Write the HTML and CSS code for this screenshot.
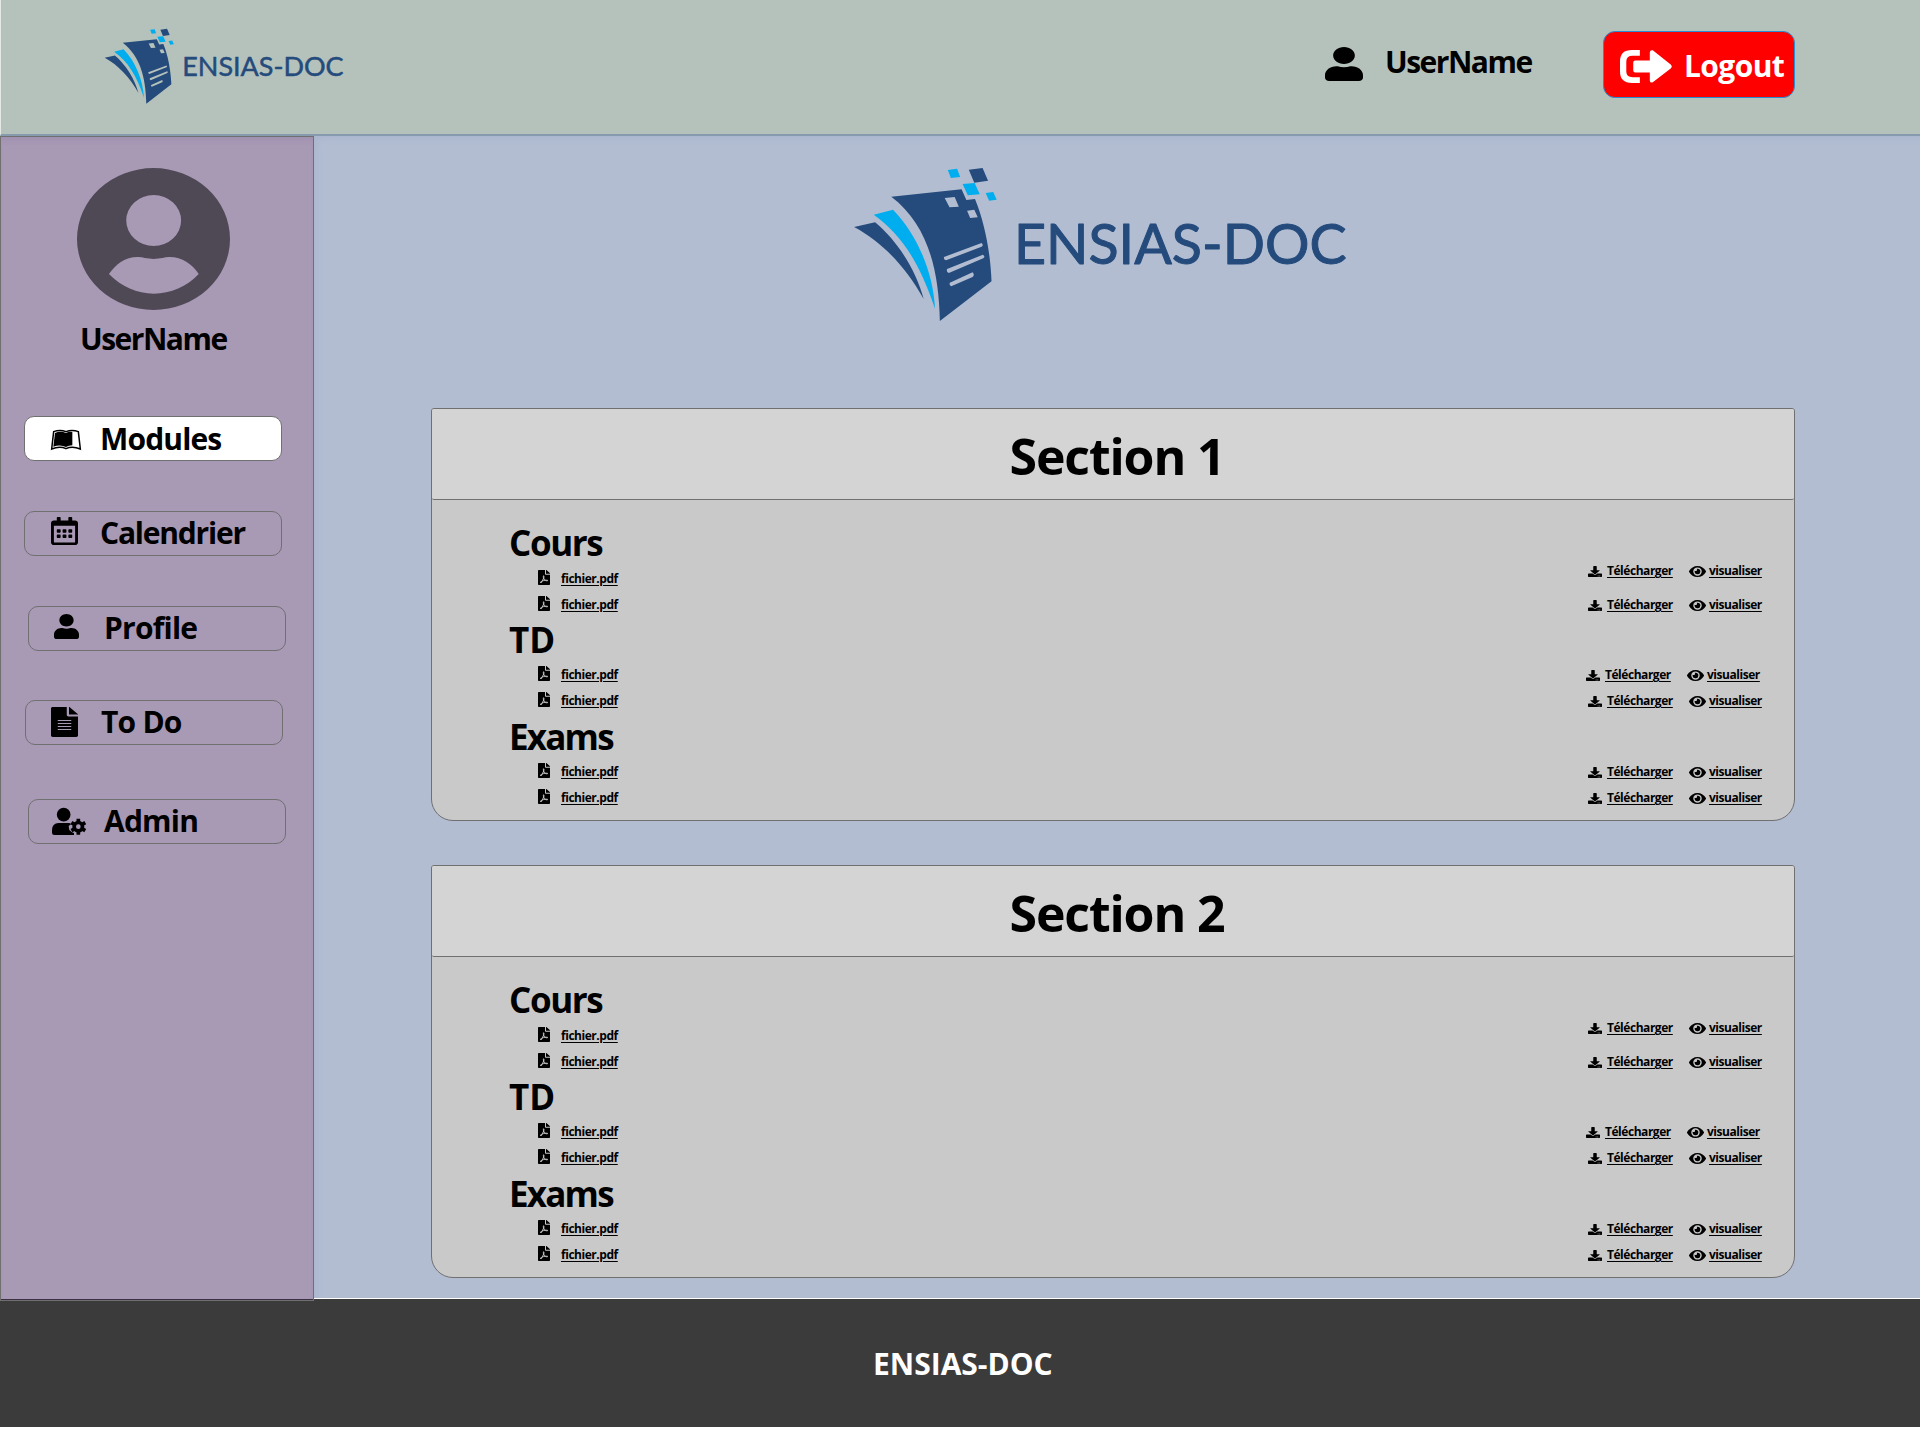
FILE: index.html
```html
<!DOCTYPE html>
<html lang="fr">
<head>
<meta charset="utf-8">
<title>ENSIAS-DOC</title>
<link rel="stylesheet" href="styles.css">
</head>
<body>
<svg class="defs" aria-hidden="true">
  <symbol id="logo" viewBox="0 0 1568 570" preserveAspectRatio="none">
    <g fill="#244b7c">
      <path d="M70 231L131 217C195 272 250 360 272 447C220 350 150 275 70 231Z"/>
      <path fill-rule="evenodd" d="M178 140L382 118L396 150L421 147C450 220 466 310 469 394L319 513C316 350 280 220 178 140ZM333 144L362 141L374 170L347 172ZM398 182L419 179L429 202L407 204ZM331 321Q329 329 337 331L440 290Q447 285 440 279ZM340 357Q337 366 345 369L445 325Q452 319 444 314ZM348 398Q345 406 352 409L414 381Q421 374 414 367Z"/>
      <path d="M403 59L443 54L459 92L419 98Z"/>
    </g>
    <g fill="#00aeef">
      <path d="M127 194L183 179C255 255 300 370 305 476C260 340 210 255 127 194Z"/>
      <path d="M342 60L369 56L378 81L351 84ZM385 102L420 99L435 133L400 136ZM452 129L474 126L484 149L462 152Z"/>
    </g>
    <text x="534" y="343" class="logo-text" textLength="966" lengthAdjust="spacingAndGlyphs">ENSIAS-DOC</text>
  </symbol>
  <symbol id="user" viewBox="0 0 448 512" preserveAspectRatio="none"><path d="M224 256c70.7 0 128-57.3 128-128S294.7 0 224 0 96 57.3 96 128s57.3 128 128 128zm89.6 32h-16.7c-22.2 10.2-46.9 16-72.9 16s-50.6-5.8-72.9-16h-16.7C60.2 288 0 348.2 0 422.4V464c0 26.5 21.5 48 48 48h352c26.5 0 48-21.5 48-48v-41.6c0-74.2-60.2-134.4-134.4-134.4z"/></symbol>
  <symbol id="download" viewBox="0 0 512 512" preserveAspectRatio="none"><path d="M216 0h80c13.3 0 24 10.7 24 24v168h87.7c17.8 0 26.7 21.5 14.1 34.1L269.7 378.3c-7.5 7.5-19.8 7.5-27.3 0L90.1 226.1c-12.6-12.6-3.7-34.1 14.1-34.1H192V24c0-13.3 10.7-24 24-24zm296 376v112c0 13.3-10.7 24-24 24H24c-13.3 0-24-10.7-24-24V376c0-13.3 10.7-24 24-24h146.7l49 49c20.1 20.1 52.5 20.1 72.6 0l49-49H488c13.3 0 24 10.7 24 24zm-124 88c0-11-9-20-20-20s-20 9-20 20 9 20 20 20 20-9 20-20zm64 0c0-11-9-20-20-20s-20 9-20 20 9 20 20 20 20-9 20-20z"/></symbol>
  <symbol id="eye" viewBox="0 64 576 384" preserveAspectRatio="none"><path d="M572.52 241.4C518.29 135.59 410.93 64 288 64S57.68 135.64 3.48 241.41a32.35 32.35 0 0 0 0 29.19C57.71 376.41 165.07 448 288 448s230.32-71.64 284.52-177.41a32.35 32.35 0 0 0 0-29.19zM288 400a144 144 0 1 1 144-144 143.93 143.93 0 0 1-144 144zm0-240a95.31 95.31 0 0 0-25.31 3.79 47.85 47.85 0 0 1-66.9 66.9A95.78 95.78 0 1 0 288 160z"/></symbol>
  <symbol id="pdf" viewBox="0 0 384 512" preserveAspectRatio="none"><path d="M181.9 256.1c-5-16-4.9-46.9-2-46.9 8.4 0 7.6 36.9 2 46.9zm-1.7 47.2c-7.7 20.2-17.3 43.3-28.4 62.7 18.3-7 39-17.2 62.9-21.9-12.7-9.6-24.9-23.4-34.5-40.8zM86.1 428.1c0 .8 13.2-5.4 34.9-40.2-6.7 6.3-29.1 24.5-34.9 40.2zM248 160h136v328c0 13.3-10.7 24-24 24H24c-13.3 0-24-10.7-24-24V24C0 10.7 10.7 0 24 0h200v136c0 13.2 10.8 24 24 24zm-8 171.8c-20-12.2-33.3-29-42.7-53.8 4.5-18.5 11.6-46.6 6.2-64.2-4.7-29.4-42.4-26.5-47.8-6.8-5 18.3-.4 44.1 8.1 77-11.6 27.6-28.7 64.6-40.8 85.8-.1 0-.1.1-.2.1-27.1 13.9-73.6 44.5-54.5 68 5.6 6.9 16 10 21.5 10 17.9 0 35.7-18 61.1-61.8 25.8-8.5 54.1-19.1 79-23.2 21.7 11.8 47.1 19.5 64 19.5 29.2 0 31.2-32 19.7-43.4-13.9-13.6-54.3-9.7-73.6-7.2zM377 105L279 7c-4.5-4.5-10.6-7-17-7h-6v128h128v-6.1c0-6.3-2.5-12.4-7-16.9zm-74.1 255.3c4.1-2.7-2.5-11.9-42.8-9 37.1 15.8 42.8 9 42.8 9z"/></symbol>
</svg>

<header class="topbar">
  <svg class="topbar-logo"><use href="#logo"/></svg>
  <div class="topbar-user">
    <svg class="topbar-user-icon"><use href="#user"/></svg>
    <span class="name">UserName</span>
  </div>
  <button class="logout">
    <svg class="logout-icon" viewBox="0 0 157 98" preserveAspectRatio="none"><path d="M60 0V17H38Q19 17 19 34V64Q19 81 38 81H60V98H36Q0 98 0 64V34Q0 0 36 0ZM46 31H90V7Q91-1 99 1L154 44Q159 49 154 54L99 96Q91 99 90 91V67H46Q40 67 40 61V37Q40 31 46 31Z"/></svg>
    <span>Logout</span>
  </button>
</header>

<div class="middle">
  <aside class="sidebar">
    <svg class="avatar" viewBox="230 143 460 427" preserveAspectRatio="none"><path fill-rule="evenodd" d="M230 356.500A230 213.500 0 0 1 690 356.500A230 213.500 0 0 1 230 356.500ZM378 301A82.500 76.500 0 0 0 543 301A82.500 76.500 0 0 0 378 301ZM326 462C348 432 375 410 415 411Q425 411 434 414Q460 419 487 414Q497 411 506 411C545 410 575 431 596 462C560 500 512 521 461 521C410 521 364 500 326 462Z"/></svg>
    <div class="name sidebar-name">UserName</div>
    <nav class="menu">
      <a class="item modules active">
        <svg viewBox="0 0 90 60"><path fill="none" stroke="#000" stroke-width="4.500" d="M8 5Q27-2 45 5Q63-2 82 5L88 57Q64 47 45 56Q26 47 2 57Z"/><path d="M12 9Q28 2 45 9Q54 4 64 6V46Q53 47 45 51Q28 42 7 50Z"/></svg>
        <span>Modules</span>
      </a>
      <a class="item calendar">
        <svg viewBox="0 0 448 512" preserveAspectRatio="none"><path d="M148 288h-40c-6.600 0-12-5.400-12-12v-40c0-6.600 5.400-12 12-12h40c6.600 0 12 5.400 12 12v40c0 6.600-5.400 12-12 12zm108-12v-40c0-6.600-5.400-12-12-12h-40c-6.600 0-12 5.400-12 12v40c0 6.600 5.400 12 12 12h40c6.600 0 12-5.400 12-12zm96 0v-40c0-6.600-5.400-12-12-12h-40c-6.600 0-12 5.400-12 12v40c0 6.600 5.400 12 12 12h40c6.600 0 12-5.400 12-12zm-96 96v-40c0-6.600-5.400-12-12-12h-40c-6.600 0-12 5.400-12 12v40c0 6.600 5.400 12 12 12h40c6.600 0 12-5.400 12-12zm-96 0v-40c0-6.600-5.400-12-12-12h-40c-6.600 0-12 5.400-12 12v40c0 6.600 5.400 12 12 12h40c6.600 0 12-5.400 12-12zm192 0v-40c0-6.600-5.400-12-12-12h-40c-6.600 0-12 5.400-12 12v40c0 6.600 5.400 12 12 12h40c6.600 0 12-5.400 12-12zm96-260v352c0 26.500-21.500 48-48 48H48c-26.500 0-48-21.500-48-48V112c0-26.500 21.500-48 48-48h48V12c0-6.600 5.400-12 12-12h40c6.600 0 12 5.400 12 12v52h128V12c0-6.600 5.400-12 12-12h40c6.600 0 12 5.400 12 12v52h48c26.500 0 48 21.500 48 48zm-48 346V160H48v298c0 3.300 2.700 6 6 6h340c3.300 0 6-2.700 6-6z"/></svg>
        <span>Calendrier</span>
      </a>
      <a class="item profile">
        <svg><use href="#user"/></svg>
        <span>Profile</span>
      </a>
      <a class="item todo">
        <svg viewBox="0 0 384 512" preserveAspectRatio="none"><path fill-rule="evenodd" d="M224 136V0H24C10.700 0 0 10.700 0 24v464c0 13.300 10.700 24 24 24h336c13.300 0 24-10.700 24-24V160H248c-13.200 0-24-10.800-24-24zM96 222H288V239H96ZM96 273H288V290H96ZM96 324H288V341H96ZM96 375H288V392H96ZM256 0H262L384 122V128H256Z"/></svg>
        <span>To Do</span>
      </a>
      <a class="item admin">
        <svg viewBox="0 0 102 81"><circle cx="35" cy="20" r="20.500"/><path d="M20 45H50Q56 45 57 49L50 54L52 66L60 73L66 75V81H7Q0 81 0 74V66Q0 46 20 45Z"/><circle cx="79" cy="56" r="12.500" fill="none" stroke="#000" stroke-width="11"/><path stroke="#000" stroke-width="11" d="M79 32V41M79 71V80M58.200 44L66 48.500M92 63.500L99.800 68M58.200 68L66 63.500M92 48.500L99.800 44"/></svg>
        <span>Admin</span>
      </a>
    </nav>
  </aside>

  <main class="content">
    <svg class="hero-logo"><use href="#logo"/></svg>

    <section class="card">
      <h1>Section 1</h1>
      <div class="card-body">
        <h2>Cours</h2>
        <div class="row raised"><svg class="pdf"><use href="#pdf"/></svg><a class="file">fichier.pdf</a><div class="actions"><svg class="dl"><use href="#download"/></svg><a class="get">Télécharger</a><svg class="eye"><use href="#eye"/></svg><a class="view">visualiser</a></div></div>
        <div class="row"><svg class="pdf"><use href="#pdf"/></svg><a class="file">fichier.pdf</a><div class="actions"><svg class="dl"><use href="#download"/></svg><a class="get">Télécharger</a><svg class="eye"><use href="#eye"/></svg><a class="view">visualiser</a></div></div>
        <h2 class="td">TD</h2>
        <div class="row inset"><svg class="pdf"><use href="#pdf"/></svg><a class="file">fichier.pdf</a><div class="actions"><svg class="dl"><use href="#download"/></svg><a class="get">Télécharger</a><svg class="eye"><use href="#eye"/></svg><a class="view">visualiser</a></div></div>
        <div class="row"><svg class="pdf"><use href="#pdf"/></svg><a class="file">fichier.pdf</a><div class="actions"><svg class="dl"><use href="#download"/></svg><a class="get">Télécharger</a><svg class="eye"><use href="#eye"/></svg><a class="view">visualiser</a></div></div>
        <h2 class="exams">Exams</h2>
        <div class="row"><svg class="pdf"><use href="#pdf"/></svg><a class="file">fichier.pdf</a><div class="actions"><svg class="dl"><use href="#download"/></svg><a class="get">Télécharger</a><svg class="eye"><use href="#eye"/></svg><a class="view">visualiser</a></div></div>
        <div class="row"><svg class="pdf"><use href="#pdf"/></svg><a class="file">fichier.pdf</a><div class="actions"><svg class="dl"><use href="#download"/></svg><a class="get">Télécharger</a><svg class="eye"><use href="#eye"/></svg><a class="view">visualiser</a></div></div>
      </div>
    </section>

    <section class="card">
      <h1>Section 2</h1>
      <div class="card-body">
        <h2>Cours</h2>
        <div class="row raised"><svg class="pdf"><use href="#pdf"/></svg><a class="file">fichier.pdf</a><div class="actions"><svg class="dl"><use href="#download"/></svg><a class="get">Télécharger</a><svg class="eye"><use href="#eye"/></svg><a class="view">visualiser</a></div></div>
        <div class="row"><svg class="pdf"><use href="#pdf"/></svg><a class="file">fichier.pdf</a><div class="actions"><svg class="dl"><use href="#download"/></svg><a class="get">Télécharger</a><svg class="eye"><use href="#eye"/></svg><a class="view">visualiser</a></div></div>
        <h2 class="td">TD</h2>
        <div class="row inset"><svg class="pdf"><use href="#pdf"/></svg><a class="file">fichier.pdf</a><div class="actions"><svg class="dl"><use href="#download"/></svg><a class="get">Télécharger</a><svg class="eye"><use href="#eye"/></svg><a class="view">visualiser</a></div></div>
        <div class="row"><svg class="pdf"><use href="#pdf"/></svg><a class="file">fichier.pdf</a><div class="actions"><svg class="dl"><use href="#download"/></svg><a class="get">Télécharger</a><svg class="eye"><use href="#eye"/></svg><a class="view">visualiser</a></div></div>
        <h2 class="exams">Exams</h2>
        <div class="row"><svg class="pdf"><use href="#pdf"/></svg><a class="file">fichier.pdf</a><div class="actions"><svg class="dl"><use href="#download"/></svg><a class="get">Télécharger</a><svg class="eye"><use href="#eye"/></svg><a class="view">visualiser</a></div></div>
        <div class="row"><svg class="pdf"><use href="#pdf"/></svg><a class="file">fichier.pdf</a><div class="actions"><svg class="dl"><use href="#download"/></svg><a class="get">Télécharger</a><svg class="eye"><use href="#eye"/></svg><a class="view">visualiser</a></div></div>
      </div>
    </section>
  </main>
</div>

<footer class="footer">ENSIAS-DOC</footer>
</body>
</html>
```
FILE: styles.css
```css
* { box-sizing: border-box; }
body {
  margin: 0;
  width: 1920px;
  height: 1430px;
  overflow: hidden;
  background: #fff;
  color: #000;
  font: 700 30px/40px "Open Sans", "Noto Sans", sans-serif;
}
svg { display: block; flex: none; overflow: visible; }
.defs { position: absolute; width: 0; height: 0; }
.logo-text {
  font: 400 166px Lato, sans-serif;
  fill: #244b7c;
  stroke: #244b7c;
  stroke-width: 3px;
  stroke-linejoin: round;
}
.name { white-space: nowrap; letter-spacing: -1.5px; }

/* Top bar */
.topbar {
  height: 136px;
  display: flex;
  align-items: flex-start;
  background: #b5c2bb;
  border-left: 1px solid #e4e9e6;
  border-bottom: 2px solid #879bae;
}
.topbar-logo { width: 262px; height: 93px; margin: 20px 0 0 92px; }
.topbar-user { display: flex; margin: 41px 0 0 970px; }
.topbar-user-icon { width: 38px; height: 34px; margin-top: 6px; }
.topbar-user .name { margin: 1px 0 0 22px; width: 218px; }
.logout {
  display: flex;
  width: 192px;
  height: 67px;
  margin-top: 31px;
  padding: 0 0 0 16px;
  border: 1px solid #2a8fd0;
  border-radius: 12px;
  background: #f00;
  color: #fff;
  font: inherit;
  text-align: left;
}
.logout-icon { width: 52px; height: 33px; margin-top: 18px; fill: #fff; }
.logout span { margin: 14px 0 0 12px; letter-spacing: -.6px; }

/* Sidebar */
.middle { display: flex; height: 1163px; }
.sidebar {
  position: relative;
  width: 314px;
  height: 1165px;
  border: 1px solid #707070;
  background: #a899b5;
  box-shadow: inset 0 6px 6px -4px rgba(120, 100, 150, .2), inset 0 -1px #3a2f45;
}
.avatar { width: 153px; height: 142px; margin: 31px 0 0 76px; fill: #4f4956; }
.sidebar-name { margin: 9px 0 0 79px; }
.menu { margin-top: 57px; }
.item {
  display: grid;
  grid-template-columns: 75px 1fr;
  width: 258px;
  height: 45px;
  margin-left: 23px;
  border: 1px solid #707070;
  border-radius: 10px;
}
.item.active { background: #fff; }
.item span { margin-top: 0; line-height: 41px; letter-spacing: -.78px; }
.modules svg { width: 30px; height: 20px; margin: 13px 0 0 26px; }
.item.modules span { margin-top: 1px; letter-spacing: -.85px; }
.calendar { margin-top: 50px; }
.calendar svg { width: 27px; height: 28px; margin: 5px 0 0 26px; }
.item.calendar span { letter-spacing: -1.2px; }
.profile { margin: 50px 0 0 27px; }
.profile svg { width: 25px; height: 25px; margin: 7px 0 0 25px; }
.todo { margin: 49px 0 0 24px; }
.todo svg { width: 27px; height: 30px; margin: 6px 0 0 25px; }
.admin { margin: 54px 0 0 27px; }
.admin svg { width: 34px; height: 27px; margin: 8px 0 0 23px; }

/* Main content */
.content {
  width: 1606px;
  height: 1163px;
  padding: 14px 125px 0 117px;
  background: #b2bdd2;
  border-bottom: 1px solid #fff;
  box-shadow: inset 6px 6px 6px -4px rgba(150, 165, 195, .3);
}
.hero-logo { width: 540px; height: 190px; margin-left: 399px; }
.card {
  height: 413px;
  margin-top: 68px;
  border: 1px solid #707070;
  border-radius: 3px 3px 22px 22px;
  background: #c9c9c9;
}
.card + .card { margin-top: 44px; }
h1 {
  height: 91px;
  margin: 0;
  padding-left: 8px;
  border-bottom: 1px solid #707070;
  border-radius: 2px;
  background: #d4d4d4;
  font-size: 50px;
  line-height: 94px;
  letter-spacing: -1.15px;
  text-align: center;
}
.card-body { padding: 21px 0 0 77px; }
h2 { height: 44px; margin: 0; font-size: 35px; line-height: 44px; letter-spacing: -1.4px; }
h2:first-child { height: 45px; }
h2.td { letter-spacing: 0; }
h2.exams { height: 45px; line-height: 46px; letter-spacing: -1.8px; }
.row { display: flex; align-items: center; height: 26px; padding-left: 29px; font-size: 12px; line-height: 18px; letter-spacing: -.46px; }
.row a { text-decoration: underline; text-underline-offset: 2px; white-space: nowrap; }
.pdf { width: 12px; height: 15px; margin-bottom: 3px; }
.file { margin-left: 11px; }
.actions { display: flex; align-items: center; width: 174px; margin: 0 32px 0 auto; }
.raised .actions { margin-bottom: 16px; }
.inset .actions { margin-right: 34px; }
.dl { width: 14px; height: 11px; }
.get { width: 66px; margin-left: 5px; }
.eye { width: 17px; height: 11px; margin-left: 16px; }
.view { margin-left: 3px; }

/* Footer */
.footer {
  height: 128px;
  padding: 45px 0 0 873px;
  background: #3b3b3b;
  color: #fff;
}
```
